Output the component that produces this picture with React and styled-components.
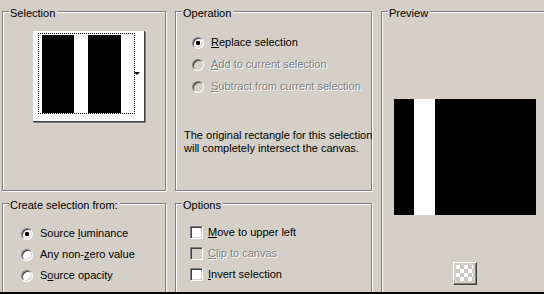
import React from "react";
import styled, { createGlobalStyle } from "styled-components";

const Global = createGlobalStyle`
  html, body { margin: 0; padding: 0; background: #d4d0c8; }
  body { font-family: "Liberation Sans", Arial, sans-serif; font-size: 11px; color: #000; }
`;

const Page = styled.div`
  width: 544px;
  height: 294px;
  box-sizing: border-box;
  border-bottom: 2px solid #000;
  overflow: hidden;
  background: #d4d0c8;
  padding: 11px 0 0 2px;
  display: grid;
  grid-template-columns: 164px 197px 167px;
  grid-template-rows: 180px 110px;
  column-gap: 9px;
  row-gap: 12px;
`;

const Group = styled.div`
  position: relative;
  border: 1px solid #808080;
  box-shadow: inset 1px 1px 0 #fff, 1px 1px 0 #fff;
  grid-column: ${(p) => p.$col};
  grid-row: ${(p) => p.$row};
  padding: ${(p) => p.$pad || "0"};
  display: flex;
  flex-direction: column;
  align-items: flex-start;
`;

const Legend = styled.span`
  position: absolute;
  top: -5px;
  left: 6px;
  padding: 0 2px 0 1px;
  line-height: 13px;
  background: #d4d0c8;
`;

const ThumbButton = styled.div`
  position: relative;
  margin: 19px 0 0 30px;
  width: 104px;
  height: 86px;
  background: #fff;
  border-right: 1px solid #404040;
  border-bottom: 1px solid #404040;
  box-shadow: 1px 1px 0 #808080;
  padding: 2px 2px 2px 5px;
`;

const Focus = styled.div`
  width: 97px;
  height: 81px;
  box-sizing: border-box;
  border: 1px dotted #000;
  padding: 1px 0 0 3px;
`;

const ThumbImage = styled.div`
  width: 79px;
  height: 78px;
  background: linear-gradient(
    to right,
    #000 0 32px,
    #fff 32px 46px,
    #000 46px 79px
  );
`;

const Arrow = styled.div`
  position: absolute;
  right: 4px;
  top: 41px;
  width: 0;
  height: 0;
  border-left: 3px solid transparent;
  border-right: 3px solid transparent;
  border-top: 3px solid #000;
`;

const OptionList = styled.div`
  display: flex;
  flex-direction: column;
  gap: ${(p) => p.$gap}px;
`;

const Row = styled.label`
  display: flex;
  align-items: center;
  gap: ${(p) => p.$gap || 7}px;
  height: 13px;
  line-height: 13px;
  color: ${(p) => (p.$disabled ? "#808080" : "#000")};
  text-shadow: ${(p) => (p.$disabled ? "1px 1px 0 #fff" : "none")};
  white-space: nowrap;
`;

const Radio = styled.span`
  position: relative;
  width: 12px;
  height: 12px;
  box-sizing: border-box;
  border-radius: 50%;
  border: 1px solid;
  border-color: #808080 #fff #fff #808080;
  background: ${(p) => (p.$disabled ? "#d4d0c8" : "#fff")};
  box-shadow: inset 1px 1px 0 #404040, inset -1px -1px 0 #d4d0c8;
  flex: none;
  &::after {
    content: "";
    display: ${(p) => (p.$checked ? "block" : "none")};
    position: absolute;
    left: 3px;
    top: 3px;
    width: 4px;
    height: 4px;
    border-radius: 1px;
    background: #000;
  }
`;

const Check = styled.span`
  width: 13px;
  height: 13px;
  box-sizing: border-box;
  border: 1px solid;
  border-color: #808080 #fff #fff #808080;
  background: ${(p) => (p.$disabled ? "#d4d0c8" : "#fff")};
  box-shadow: inset 1px 1px 0 #404040, inset -1px -1px 0 #d4d0c8;
  flex: none;
`;

const U = styled.span`
  text-decoration: underline;
  text-underline-offset: 1px;
`;

const Note = styled.p`
  margin: 0 0 0 -8px;
  line-height: 13px;
  width: 190px;
`;

const PreviewBox = styled.div`
  margin: 87px 0 0 12px;
  width: 142px;
  height: 116px;
  background: linear-gradient(
    to right,
    #000 0 20px,
    #fff 20px 41px,
    #000 41px 142px
  );
`;

const CheckerButton = styled.div`
  margin: 47px 0 0 71px;
  width: 24px;
  height: 23px;
  box-sizing: border-box;
  border: 1px solid;
  border-color: #fff #404040 #404040 #fff;
  box-shadow: inset -1px -1px 0 #808080;
  padding: 2px;
  background: #d4d0c8;
`;

const Checker = styled.div`
  width: 17px;
  height: 16px;
  background-color: #fff;
  background-image: linear-gradient(45deg, #c8c8c8 25%, transparent 25%, transparent 75%, #c8c8c8 75%),
    linear-gradient(45deg, #c8c8c8 25%, transparent 25%, transparent 75%, #c8c8c8 75%);
  background-size: 8px 8px;
  background-position: 0 0, 4px 4px;
`;

const Spacer = styled.div`
  height: ${(p) => p.$h}px;
`;

export default function App() {
  return (
    <>
      <Global />
      <Page>
        <Group $col="1" $row="1">
          <Legend>Selection</Legend>
          <ThumbButton>
            <Focus>
              <ThumbImage />
            </Focus>
            <Arrow />
          </ThumbButton>
        </Group>

        <Group $col="2" $row="1" $pad="24px 0 0 16px">
          <Legend>Operation</Legend>
          <OptionList $gap={9}>
            <Row>
              <Radio $checked />
              <span>
                <U>R</U>eplace selection
              </span>
            </Row>
            <Row $disabled>
              <Radio $disabled />
              <span>
                <U>A</U>dd to current selection
              </span>
            </Row>
            <Row $disabled>
              <Radio $disabled />
              <span>
                <U>S</U>ubtract from current selection
              </span>
            </Row>
          </OptionList>
          <Spacer $h={36} />
          <Note>
            The original rectangle for this selection will completely intersect the canvas.
          </Note>
        </Group>

        <Group $col="3" $row="1 / span 2">
          <Legend>Preview</Legend>
          <PreviewBox />
          <CheckerButton>
            <Checker />
          </CheckerButton>
        </Group>

        <Group $col="1" $row="2" $pad="23px 0 0 18px">
          <Legend>Create selection from:</Legend>
          <OptionList $gap={8}>
            <Row>
              <Radio $checked />
              <span>
                Source <U>l</U>uminance
              </span>
            </Row>
            <Row>
              <Radio />
              <span>
                Any non-<U>z</U>ero value
              </span>
            </Row>
            <Row>
              <Radio />
              <span>
                S<U>o</U>urce opacity
              </span>
            </Row>
          </OptionList>
        </Group>

        <Group $col="2" $row="2" $pad="22px 0 0 14px">
          <Legend>Options</Legend>
          <OptionList $gap={8}>
            <Row $gap={5}>
              <Check />
              <span>
                <U>M</U>ove to upper left
              </span>
            </Row>
            <Row $gap={5} $disabled>
              <Check $disabled />
              <span>
                <U>C</U>lip to canvas
              </span>
            </Row>
            <Row $gap={5}>
              <Check />
              <span>
                <U>I</U>nvert selection
              </span>
            </Row>
          </OptionList>
        </Group>
      </Page>
    </>
  );
}
